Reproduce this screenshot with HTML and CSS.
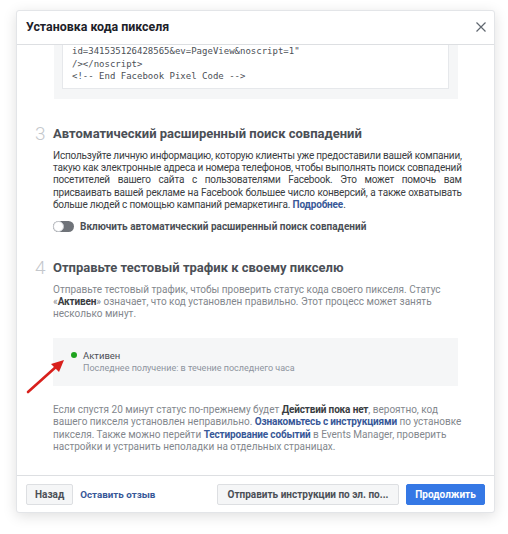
FILE: index.html
```html
<!DOCTYPE html>
<html lang="ru">
<head>
<meta charset="utf-8">
<link rel="stylesheet" href="styles.css">
</head>
<body>
<div class="modal">
  <div class="header">
    <div class="title">Установка кода пикселя</div>
    <svg class="close" width="12" height="12" viewBox="0 0 12 12"><path d="M1.5 1.5 L10.5 10.5 M10.5 1.5 L1.5 10.5" stroke="#606770" stroke-width="1.2" fill="none"/></svg>
  </div>
  <div class="body">
    <div class="section">
      <div class="num"></div>
      <div class="codewrap">
        <div class="code">id=341535126428565&amp;ev=PageView&amp;noscript=1"
/&gt;&lt;/noscript&gt;
&lt;!-- End Facebook Pixel Code --&gt;</div>
      </div>
    </div>
    <div class="section s3">
      <div class="num">3</div>
      <div class="content">
        <div class="heading">Автоматический расширенный поиск совпадений</div>
        <div class="para dark">
          <span class="jl">Используйте личную информацию, которую клиенты уже предоставили вашей компании,</span>
          <span class="jl">такую как электронные адреса и номера телефонов, чтобы выполнять поиск совпадений</span>
          <span class="jl">посетителей вашего сайта с пользователями Facebook. Это может помочь вам</span>
          <span class="jl">присваивать вашей рекламе на Facebook большее число конверсий, а также охватывать</span>
          <span class="ll">больше людей с помощью кампаний ремаркетинга. <a class="link">Подробнее</a>.</span>
        </div>
        <div class="toggle-row">
          <span class="toggle"><span class="knob"></span></span>
          <span class="toggle-label">Включить автоматический расширенный поиск совпадений</span>
        </div>
      </div>
    </div>
    <div class="section s4">
      <div class="num">4</div>
      <div class="content">
        <div class="heading">Отправьте тестовый трафик к своему пикселю</div>
        <p class="para light">Отправьте тестовый трафик, чтобы проверить статус кода своего пикселя. Статус<br>«<b>Активен</b>» означает, что код установлен правильно. Этот процесс может занять<br>несколько минут.</p>
        <div class="status">
          <div class="status-line"><span class="dot"></span><span class="status-name">Активен</span></div>
          <div class="status-sub">Последнее получение: в течение последнего часа</div>
        </div>
        <p class="para light bottom">Если спустя 20 минут статус по-прежнему будет <b>Действий пока нет</b>, вероятно, код<br>вашего пикселя установлен неправильно. <a class="link">Ознакомьтесь с инструкциями</a> по установке<br>пикселя. Также можно перейти <a class="link">Тестирование событий</a> в Events Manager, проверить<br>настройки и устранить неполадки на отдельных страницах.</p>
      </div>
    </div>
  </div>
  <div class="footer">
    <button class="btn">Назад</button>
    <a class="link footer-link">Оставить отзыв</a>
    <span class="spacer"></span>
    <button class="btn send">Отправить инструкции по эл. по...</button>
    <button class="btn primary">Продолжить</button>
  </div>
</div>
<svg class="arrow" width="50" height="45" viewBox="0 0 50 45">
  <line x1="6" y1="39" x2="35" y2="13" stroke="#d8201c" stroke-width="2.6" stroke-linecap="round"/>
  <polygon points="42,7 29,11 37,19" fill="#d8201c"/>
</svg>
</body>
</html>
```

FILE: styles.css
```css
html, body {
  margin: 0;
  padding: 0;
  background: #ffffff;
}
body {
  font-family: Roboto, "Liberation Sans", Arial, sans-serif;
  position: relative;
  width: 508px;
  height: 534px;
  overflow: hidden;
}
.modal {
  margin: 10px 0 0 16px;
  width: 479px;
  height: 503px;
  box-sizing: border-box;
  border: 1px solid #e3e5e8;
  border-radius: 3px;
  background: #fff;
  box-shadow: 0 3px 14px rgba(0, 0, 0, 0.13);
  display: flex;
  flex-direction: column;
  overflow: hidden;
}
.header {
  height: 34px;
  flex: none;
  box-sizing: border-box;
  border-bottom: 1px solid #dddfe2;
  display: flex;
  align-items: center;
  padding: 0 7px 2px 9px;
}
.title {
  flex: 1;
  font-size: 12.4px;
  font-weight: bold;
  color: #1d2129;
}
.close {
  display: block;
}
.body {
  flex: 1;
  overflow: hidden;
  padding: 0 36px 0 18px;
}
.section {
  display: grid;
  grid-template-columns: 18px 1fr;
}
.num {
  font-size: 19px;
  font-weight: 300;
  color: #c4c7cc;
  line-height: 18px;
}
.codewrap {
  background: #f5f6f7;
  margin-left: 1px;
  padding: 0 9px 10px 8px;
}
.code {
  background: #fff;
  border: 1px solid #e6e8eb;
  border-top: none;
  padding: 0 9px 5px;
  font-family: "DejaVu Sans Mono", monospace;
  font-size: 9px;
  line-height: 12.5px;
  color: #4b4f56;
  white-space: pre;
}
.s3 {
  margin-top: 26px;
}
.s4 {
  margin-top: 26px;
}
.heading {
  font-size: 13px;
  font-weight: bold;
  color: #4b4f56;
  line-height: 18px;
}
.para {
  margin: 7px 0 0;
  font-size: 10px;
  line-height: 12.4px;
}
.para.dark {
  color: #3a3d42;
  letter-spacing: -0.2px;
}
.jl {
  display: block;
  white-space: nowrap;
  text-align: justify;
  text-align-last: justify;
}
.ll {
  display: block;
  white-space: nowrap;
}
.para.light {
  color: #83878d;
  white-space: nowrap;
}
.para b {
  color: #3a3d42;
  letter-spacing: -0.15px;
}
.para .link {
  letter-spacing: -0.15px;
}
.link {
  color: #385898;
  font-weight: bold;
  text-decoration: none;
}
.toggle-row {
  display: flex;
  align-items: center;
  margin-top: 9px;
  height: 12px;
}
.toggle {
  width: 21px;
  height: 11px;
  border-radius: 6px;
  background: #6f7379;
  position: relative;
  flex: none;
}
.knob {
  position: absolute;
  left: 0;
  top: 0;
  width: 9px;
  height: 9px;
  border-radius: 50%;
  background: #fff;
  border: 1px solid #c9ccd1;
}
.toggle-label {
  margin-left: 6px;
  font-size: 10px;
  font-weight: bold;
  color: #4b4f56;
}
.status {
  margin-top: 17px;
  background: #f5f6f7;
  height: 48px;
  box-sizing: border-box;
  padding: 11px 0 0 18px;
  margin-right: 3px;
}
.status-line {
  display: flex;
  align-items: center;
  height: 13px;
}
.dot {
  width: 6px;
  height: 6px;
  border-radius: 50%;
  background: #1ea31e;
  margin-right: 6px;
}
.status-name {
  font-size: 9.5px;
  color: #4b4f56;
}
.status-sub {
  margin-left: 12px;
  font-size: 9px;
  color: #8d949e;
  line-height: 13px;
}
.para.bottom {
  margin-top: 18px;
}
.footer {
  flex: none;
  height: 37px;
  box-sizing: border-box;
  border-top: 1px solid #dddfe2;
  display: flex;
  align-items: center;
  padding: 0 9px 0 9px;
}
.btn {
  height: 21px;
  box-sizing: border-box;
  border: 1px solid #dddfe2;
  border-radius: 2px;
  background: #f5f6f7;
  color: #4b4f56;
  font-family: Roboto, "Liberation Sans", Arial, sans-serif;
  font-size: 10px;
  font-weight: bold;
  padding: 0 8px;
  white-space: nowrap;
}
.footer-link {
  margin-left: 7px;
  font-size: 9.8px;
}
.spacer {
  flex: 1;
}
.send {
  width: 182px;
}
.primary {
  margin-left: 7px;
  width: 79px;
  background: #3578e5;
  border-color: #3578e5;
  color: #fff;
}
.arrow {
  position: absolute;
  left: 22px;
  top: 353px;
}
```
